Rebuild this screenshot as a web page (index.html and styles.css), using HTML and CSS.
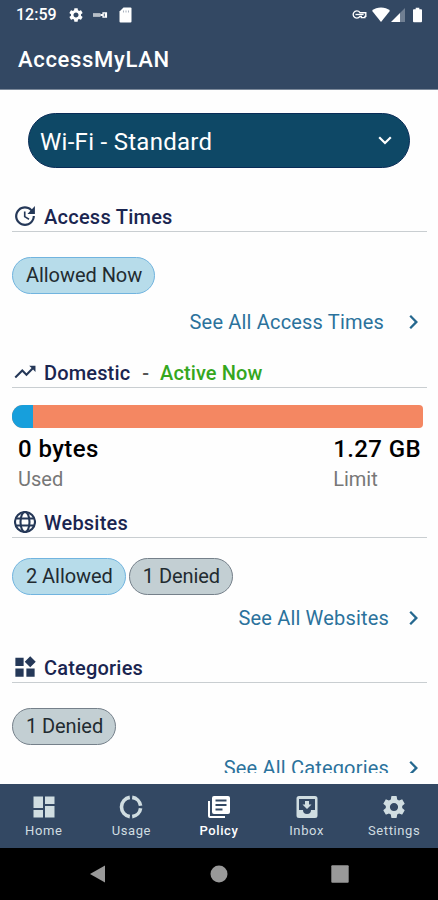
FILE: index.html
```html
<!DOCTYPE html>
<html lang="en">
<head>
<meta charset="utf-8">
<title>AccessMyLAN</title>
<link rel="stylesheet" href="styles.css">
</head>
<body>
<svg class="defs" width="0" height="0">
  <symbol id="gear" viewBox="0 0 24 24"><path d="M19.14 12.94c.04-.3.06-.61.06-.94 0-.32-.02-.64-.07-.94l2.03-1.58c.18-.14.23-.41.12-.61l-1.92-3.32c-.12-.22-.37-.29-.59-.22l-2.39.96c-.5-.38-1.03-.7-1.62-.94l-.36-2.54c-.04-.24-.24-.41-.48-.41h-3.84c-.24 0-.43.17-.47.41l-.36 2.54c-.59.24-1.13.57-1.62.94l-2.39-.96c-.22-.08-.47 0-.59.22L2.74 8.87c-.12.21-.08.47.12.61l2.03 1.58c-.05.3-.09.63-.09.94s.02.64.07.94l-2.03 1.58c-.18.14-.23.41-.12.61l1.92 3.32c.12.22.37.29.59.22l2.39-.96c.5.38 1.03.7 1.62.94l.36 2.54c.05.24.24.41.48.41h3.84c.24 0 .44-.17.47-.41l.36-2.54c.59-.24 1.13-.56 1.62-.94l2.39.96c.22.08.47 0 .59-.22l1.92-3.32c.12-.22.07-.47-.12-.61l-2.01-1.58zM12 15.6c-1.98 0-3.6-1.62-3.6-3.6s1.62-3.6 3.6-3.6 3.6 1.62 3.6 3.6-1.62 3.6-3.6 3.6z"/></symbol>
  <symbol id="chevron" viewBox="0 0 24 24"><path d="M9 5L7.400 6.600 12.700 12l-5.300 5.400L9 19l7-7z"/></symbol>
</svg>
<header class="header">
  <div class="status">
    <span class="clock">12:59</span>
    <svg class="st-gear" viewBox="2 2 20 20"><use href="#gear" width="24" height="24"/></svg>
    <svg class="st-usb" viewBox="0 0 16 8"><path d="M0 2h8v4H0z" opacity=".65"/><path d="M8 3h2V1h5v6h-5V5H8z"/><path d="M11.500 2.500h1v3h-1z" fill="#334863"/></svg>
    <svg class="st-sd" viewBox="0 0 13 16"><path d="M4.500.500H11.500a1 1 0 0 1 1 1v13a1 1 0 0 1-1 1h-10a1 1 0 0 1-1-1V4.500z"/><path d="M4 3.500h1v2H4zM6.500 3.500h1v2h-1zM9 3.500h1v2H9z" fill="#a9b2be"/></svg>
    <span class="spacer"></span>
    <svg class="st-key" viewBox="0 0 16 10"><path d="M5 1a4 4 0 1 0 3.500 6h1.500v1.500h4V7h1V3H8.500A4 4 0 0 0 5 1z" fill="none" stroke="#fff" stroke-width="1.500"/><path d="M3.500 5h9" stroke="#fff" stroke-width="1.500"/></svg>
    <svg class="st-wifi" viewBox="0 0 18 15"><path d="M9 .500C5.500.500 2.500 1.600 0 3.700L9 15l9-11.300C15.500 1.600 12.500.500 9 .500z"/></svg>
    <svg class="st-cell" viewBox="0 0 14 14"><path d="M14 0v14H9V5z" opacity=".3"/><path d="M9 5v9H0z"/></svg>
    <svg class="st-batt" viewBox="0 0 10 16"><path d="M3 0h4v1.500h2a1 1 0 0 1 1 1V15a1 1 0 0 1-1 1H1a1 1 0 0 1-1-1V2.500a1 1 0 0 1 1-1h2z"/></svg>
  </div>
  <h1 class="title">AccessMyLAN</h1>
</header>
<main class="content">
  <div class="select">
    <span class="select-label">Wi-Fi - Standard</span>
    <svg class="select-arrow" viewBox="0 0 14 9"><path d="M1.200 1.300L7 7l5.800-5.700" fill="none" stroke="#fff" stroke-width="2.200"/></svg>
  </div>
  <section class="section access">
    <h2 class="head"><svg viewBox="2 2 20 20"><path d="M21 10.120h-6.780l2.740-2.820c-2.730-2.700-7.150-2.800-9.880-.1-2.730 2.710-2.730 7.080 0 9.790s7.150 2.710 9.880 0C18.320 15.650 19 14.080 19 12.100h2c0 1.980-.880 4.550-2.640 6.290-3.510 3.480-9.210 3.480-12.720 0-3.500-3.470-3.530-9.110-.020-12.580s9.140-3.470 12.650 0L21 3v7.120zM12.500 8v4.250l3.500 2.080-.720 1.210L11 13V8h1.500z"/></svg><span class="t-access">Access Times</span></h2>
    <div class="chips"><span class="chip allow">Allowed Now</span></div>
    <a class="more"><span class="m-access">See All Access Times</span><svg><use href="#chevron"/></svg></a>
  </section>
  <section class="section domestic">
    <h2 class="head"><svg viewBox="1.500 1.500 21 21"><path d="M16 6l2.290 2.290-4.880 4.880-4-4L2 16.590 3.410 18l6-6 4 4 6.300-6.290L22 12V6z"/></svg><span class="t-dom">Domestic</span><span class="dash">-</span><span class="active">Active Now</span></h2>
    <div class="bar"><div class="used"></div></div>
    <div class="stats">
      <div><div class="num">0 bytes</div><div class="cap">Used</div></div>
      <div class="limit"><div class="num">1.27 GB</div><div class="cap">Limit</div></div>
    </div>
  </section>
  <section class="section websites">
    <h2 class="head"><svg viewBox="1 1 22 22"><g fill="none" stroke="#253858" stroke-width="2.100"><circle cx="12" cy="12" r="10"/><ellipse cx="12" cy="12" rx="4.500" ry="10"/><path d="M3 8.500h18M3 15.500h18"/></g></svg><span class="t-web">Websites</span></h2>
    <div class="chips"><span class="chip allow">2 Allowed</span><span class="chip deny">1 Denied</span></div>
    <a class="more"><span class="m-web">See All Websites</span><svg><use href="#chevron"/></svg></a>
  </section>
  <section class="section categories">
    <h2 class="head"><svg viewBox="0 0 24 24"><path d="M1.500 2h9v9h-9zM1.500 13.500h9v9h-9zM13.500 13.500h9v9h-9zM17.700.300l6 6-6 6-6-6z"/></svg><span class="t-cat">Categories</span></h2>
    <div class="chips"><span class="chip deny">1 Denied</span></div>
    <a class="more"><span class="m-cat">See All Categories</span><svg><use href="#chevron"/></svg></a>
  </section>
</main>
<nav class="tabs">
  <div class="tab"><svg viewBox="0 0 24 24"><path d="M1.500 1.500h9.500v11.500H1.500zM1.500 15h9.500v7.500H1.500zM13 11h9.500v11.500h-9.500zM13 1.500h9.500v7.500h-9.500z"/></svg><span>Home</span></div>
  <div class="tab"><svg viewBox="0 0 24 24"><g fill="none" stroke="#d0dde1" stroke-width="3.600"><path d="M13.200 2.400A9.700 9.700 0 0 1 21.600 10.800M21.600 13.200A9.700 9.700 0 0 1 13.200 21.600M10.800 21.600A9.700 9.700 0 0 1 10.800 2.400"/></g></svg><span>Usage</span></div>
  <div class="tab current"><svg viewBox="0 0 24 24"><path d="M3 6H1v15a2 2 0 0 0 2 2h15v-2H3z"/><path fill-rule="evenodd" d="M21 1H7a2 2 0 0 0-2 2v14a2 2 0 0 0 2 2h14a2 2 0 0 0 2-2V3a2 2 0 0 0-2-2zM8.500 4.500h11v2h-11zM8.500 9h11v2h-11zM8.500 13.500h7v2h-7z"/></svg><span>Policy</span></div>
  <div class="tab"><svg viewBox="0 0 24 24"><path fill-rule="evenodd" d="M20 1H4a2.500 2.500 0 0 0-2.500 2.500v17A2.500 2.500 0 0 0 4 23h16a2.500 2.500 0 0 0 2.500-2.500v-17A2.500 2.500 0 0 0 20 1zM20 15h-4a4 4 0 0 1-8 0H4V4h16z"/><path d="M16.500 9.500H14V6h-4v3.500H7.500L12 14z"/></svg><span>Inbox</span></div>
  <div class="tab"><svg class="gear" viewBox="1.500 1.500 21 21"><use href="#gear" width="24" height="24"/></svg><span>Settings</span></div>
</nav>
<footer class="system">
  <svg viewBox="0 0 18 18"><path d="M1 9L16 .500v17z"/></svg>
  <svg viewBox="0 0 18 18"><circle cx="9" cy="9" r="8.500"/></svg>
  <svg viewBox="0 0 18 18"><rect x=".300" y=".300" width="17.400" height="17.400" rx="1"/></svg>
</footer>
</body>
</html>
```
FILE: styles.css
```css
* { box-sizing: border-box; }
body { margin: 0; width: 438px; height: 900px; display: flex; flex-direction: column; overflow: hidden; background: #fefefe; font-family: Roboto, sans-serif; color: #000; }
svg { display: block; flex: none; }
.defs { position: absolute; }
h1, h2 { margin: 0; font-weight: 500; }
span { white-space: nowrap; }

.header { height: 90px; flex: none; background: #334863; border-bottom: 1px solid #7c899a; color: #fff; }
.status { height: 29px; padding: 0 16px 0 16px; display: flex; align-items: center; fill: #fff; }
.clock { width: 53px; font-size: 16px; font-weight: 500; line-height: 29px; }
.st-gear { width: 14px; height: 14px; }
.st-usb { width: 15px; height: 8px; margin-left: 10px; }
.st-sd { width: 13px; height: 16px; margin-left: 11px; }
.spacer { flex: 1; }
.st-key { width: 15px; height: 9px; }
.st-wifi { width: 18px; height: 15px; margin-left: 5px; }
.st-cell { width: 14px; height: 14px; margin-left: 1px; }
.st-batt { width: 9px; height: 16px; margin: 0 0 0 8px; }
.title { padding-left: 18px; font-size: 22px; line-height: 62px; letter-spacing: .68px; }

.content { height: 683px; flex: none; padding: 23px 11px 0 12px; overflow: hidden; }
.select { height: 55px; margin: 0 17px 32px 16px; padding: 2px 17px 0 11px; display: flex; align-items: center; justify-content: space-between; border: 1px solid #092c57; border-radius: 28px; background: #0e4866; color: #fff; font-size: 24px; letter-spacing: .28px; line-height: 52px; }
.select-label { padding-top: 1px; }
.select-arrow { width: 14px; height: 9px; margin-bottom: 2px; }

.section { display: flex; flex-direction: column; }
.access { height: 156px; }
.domestic { height: 150px; }
.websites { height: 145px; }
.categories { height: 146px; }
.head { height: 32px; flex: none; display: flex; align-items: center; padding-top: 1px; border-bottom: 1px solid #c9ced1; margin-bottom: 0; font-size: 20px; line-height: 30px; color: #1a2550; }
.head span { padding-top: 1px; }
.head svg { width: 22px; height: 22px; margin: 0 8px 0 2px; fill: #253858; }
.t-access { letter-spacing: .25px; }
.t-dom { letter-spacing: .15px; }
.t-web { letter-spacing: .2px; }
.t-cat { letter-spacing: .2px; }
.dash { margin: 0 11px 0 12px; color: #555; }
.active { color: #35a71e; letter-spacing: .1px; }
.chips { display: flex; gap: 3px; margin-top: 25px; }
.websites .chips { margin-top: 20px; }
.chip { height: 37px; padding: 0 12px 0 13px; border: 1px solid; border-radius: 19px; font-size: 20px; line-height: 35px; letter-spacing: -.05px; color: #222b30; }
.allow { background: #b7dcea; border-color: #71b4df; }
.deny { background: #c3cfd3; border-color: #75808a; letter-spacing: -.08px; }
.more { display: flex; align-items: center; justify-content: flex-end; height: 30px; margin-top: 13px; color: #2b729c; fill: #25688f; font-size: 20px; line-height: 30px; letter-spacing: .18px; }
.websites .more { margin-top: 8px; }
.categories .more { margin-top: 8px; }
.more svg { width: 24px; height: 24px; margin: 0 1px 0 13px; }
.access .more svg { margin-left: 18px; }
.bar { height: 23px; flex: none; margin: 17px 4px 0 0; border-radius: 11px 4px 4px 11px; background: #f48762; overflow: hidden; }
.used { width: 21px; height: 100%; background: #179fdc; }
.stats { display: flex; justify-content: space-between; padding: 5px 6px 0 6px; }
.num { font-size: 24px; font-weight: 500; line-height: 32px; letter-spacing: .4px; }
.cap { font-size: 20px; line-height: 28px; color: #777; }

.tabs { height: 64px; flex: none; margin-top: 11px; display: grid; grid-template-columns: repeat(5, 1fr); background: #334863; color: #d0dde1; fill: #d0dde1; }
.tab { display: flex; flex-direction: column; align-items: center; padding-top: 11px; font-size: 13px; letter-spacing: .6px; }
.tab svg { width: 24px; height: 24px; }
.tab span { line-height: 24px; }
.current { color: #fff; fill: #fff; font-weight: 500; }
.system { flex: 1; display: flex; align-items: center; justify-content: space-between; padding: 0 89px; background: #000; fill: #999; }
.system svg { width: 18px; height: 18px; }
```
